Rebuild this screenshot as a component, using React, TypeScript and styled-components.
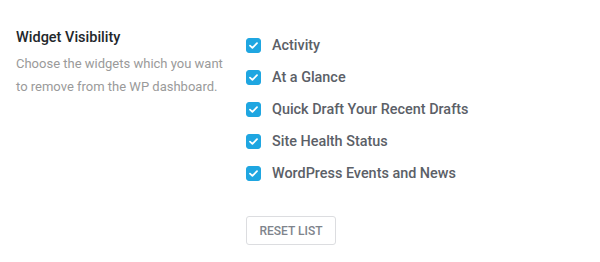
import React, { useState } from 'react';
import styled, { createGlobalStyle } from 'styled-components';

const GlobalStyles = createGlobalStyle`
  * {
    margin: 0;
    padding: 0;
    box-sizing: border-box;
  }

  body {
    background: #ffffff;
    font-family: Roboto, "Liberation Sans", Arial, sans-serif;
  }
`;

const Section = styled.div`
  display: flex;
  align-items: flex-start;
  padding: 28px 16px;
  width: 600px;
`;

const Info = styled.div`
  width: 230px;
  flex-shrink: 0;
`;

const Title = styled.h3`
  font-size: 14.5px;
  line-height: 20px;
  font-weight: 500;
  color: #23272b;
`;

const Description = styled.p`
  margin-top: 4px;
  font-size: 13px;
  line-height: 23px;
  color: #9a9a9a;
  width: 212px;
`;

const Options = styled.div`
  display: flex;
  flex-direction: column;
  align-items: flex-start;
  padding-top: 1px;
`;

const Row = styled.label`
  display: flex;
  align-items: center;
  height: 32px;
  gap: 11px;
  cursor: pointer;
  font-size: 14.4px;
  font-weight: 500;
  color: #5b6067;
`;

const Box = styled.span<{ $checked: boolean }>`
  width: 15px;
  height: 15px;
  border-radius: 3px;
  display: flex;
  align-items: center;
  justify-content: center;
  background: ${p => (p.$checked ? '#1fa6e1' : '#ffffff')};
  border: 1px solid ${p => (p.$checked ? '#1fa6e1' : '#b4b9be')};
`;

const ResetButton = styled.button`
  margin-top: 27px;
  width: 90px;
  height: 29px;
  border: 1px solid #dcdde0;
  border-radius: 3px;
  background: #ffffff;
  font-family: inherit;
  font-size: 12px;
  font-weight: 500;
  color: #7e848c;
  text-transform: uppercase;
  cursor: pointer;
`;

const widgets = [
  'Activity',
  'At a Glance',
  'Quick Draft Your Recent Drafts',
  'Site Health Status',
  'WordPress Events and News',
];

export default function App() {
  const [checked, setChecked] = useState<boolean[]>(widgets.map(() => true));

  const toggle = (i: number) =>
    setChecked(prev => prev.map((v, j) => (j === i ? !v : v)));

  return (
    <>
      <GlobalStyles />
      <Section>
        <Info>
          <Title>Widget Visibility</Title>
          <Description>
            Choose the widgets which you want to remove from the WP dashboard.
          </Description>
        </Info>
        <Options>
          {widgets.map((w, i) => (
            <Row key={w} onClick={() => toggle(i)}>
              <Box $checked={checked[i]}>
                {checked[i] && (
                  <svg width="9" height="7" viewBox="0 0 9 7">
                    <path
                      d="M1 3.6 L3.4 5.8 L8 1.2"
                      fill="none"
                      stroke="#fff"
                      strokeWidth="1.8"
                      strokeLinecap="round"
                      strokeLinejoin="round"
                    />
                  </svg>
                )}
              </Box>
              {w}
            </Row>
          ))}
          <ResetButton onClick={() => setChecked(widgets.map(() => true))}>
            Reset List
          </ResetButton>
        </Options>
      </Section>
    </>
  );
}
